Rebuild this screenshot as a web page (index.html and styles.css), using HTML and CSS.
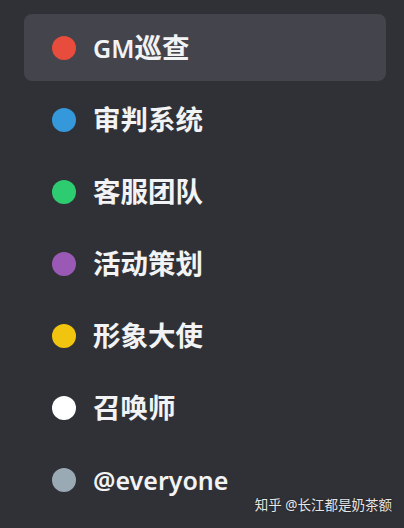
FILE: index.html
```html
<!DOCTYPE html>
<html lang="zh-CN">
<head>
    <meta charset="UTF-8">
    <title>身份组</title>
    <link rel="stylesheet" href="styles.css">
</head>
<body>
<div class="role-list">
    <div class="role active"><span class="dot red"></span><span class="name"><span class="latin">GM</span>巡查</span></div>
    <div class="role"><span class="dot blue"></span><span class="name">审判系统</span></div>
    <div class="role"><span class="dot green"></span><span class="name">客服团队</span></div>
    <div class="role"><span class="dot purple"></span><span class="name">活动策划</span></div>
    <div class="role"><span class="dot yellow"></span><span class="name">形象大使</span></div>
    <div class="role"><span class="dot white"></span><span class="name">召唤师</span></div>
    <div class="role"><span class="dot grey"></span><span class="name"><span class="latin">@everyone</span></span></div>
</div>
<div class="watermark">知乎 @长江都是奶茶额</div>
</body>
</html>
```

FILE: styles.css
```css
html, body { margin: 0; height: 100%; }
body { background: #303136; font-family: "Noto Sans", "Noto Sans CJK SC", sans-serif; color: #f2f3f5; position: relative; overflow: hidden; }
.role-list { display: flex; flex-direction: column; gap: 5px; padding: 14px 18px 0 24px; }
.role { display: flex; align-items: center; gap: 17px; height: 67px; padding-left: 28px; border-radius: 8px; }
.role.active { background: #44444c; }
.dot { width: 24px; height: 24px; border-radius: 50%; flex: none; }
.name { font-size: 27.5px; font-weight: 700; line-height: 1; }
.latin { font-size: 25px; font-weight: 600; }
.red { background: #e74c3c; }
.blue { background: #3498db; }
.green { background: #2ecc71; }
.purple { background: #9b59b6; }
.yellow { background: #f1c40f; }
.white { background: #ffffff; }
.grey { background: #99aab5; }
.watermark { position: absolute; right: 12px; bottom: 14px; font-size: 13.5px; color: #e6e6e6; text-shadow: 0 0 2px rgba(0,0,0,0.5); }
```
